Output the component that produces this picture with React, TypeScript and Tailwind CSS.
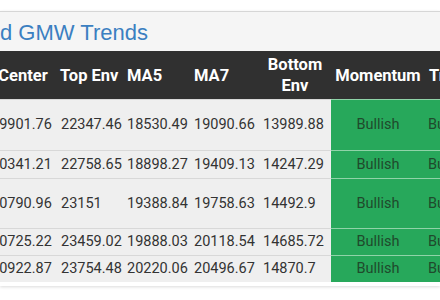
import React from "react";

const rows = [
  { h: "h-[51px]", v: ["19901.76", "22347.46", "18530.49", "19090.66", "13989.88"] },
  { h: "h-[28px]", v: ["20341.21", "22758.65", "18898.27", "19409.13", "14247.29"] },
  { h: "h-[50px]", v: ["20790.96", "23151", "19388.84", "19758.63", "14492.9"] },
  { h: "h-[27px]", v: ["20725.22", "23459.02", "19888.03", "20118.54", "14685.72"] },
  { h: "h-[27px]", v: ["20922.87", "23754.48", "20220.06", "20496.67", "14870.7"] },
];

const cols = "grid grid-cols-[70px_66px_67px_68px_72px_94px_80px]";

export default function App() {
  return (
    <div className="w-[440px] h-[300px] overflow-hidden bg-white" style={{ fontFamily: "Roboto, sans-serif" }}>
      <div className="h-[11px]" />
      <div className="border-t border-[#d6d6d6] shadow-[0_1px_3px_rgba(0,0,0,0.15)] bg-white">
        <div className="h-[39px] bg-[#f5f5f5] flex items-center">
          <span
            className="text-[22px] leading-none text-[#3b7fc1] pt-[3px]"
            style={{ fontFamily: "'Liberation Sans', Arial, sans-serif" }}
          >
            d GMW Trends
          </span>
        </div>
        <div className="ml-[-12px] w-[560px]">
          <div className={`${cols} h-[48px] bg-[#303030] text-white font-bold text-[16.5px] leading-[21px]`}>
            <div className="flex items-center justify-center">Center</div>
            <div className="flex items-center pl-[2px]">Top Env</div>
            <div className="flex items-center pl-[3px]">MA5</div>
            <div className="flex items-center pl-[3px]">MA7</div>
            <div className="flex items-center justify-center text-center">
              Bottom
              <br />
              Env
            </div>
            <div className="flex items-center justify-center">Momentum</div>
            <div className="flex items-center pl-[4px]">Trend</div>
          </div>
          {rows.map((r, i) => (
            <div key={i} className={`${cols} ${r.h} text-[14.5px] text-[#333]`}>
              {r.v.map((val, j) => (
                <div
                  key={j}
                  className={`flex items-center bg-[#efefef] border-t border-[#d8d8d8] ${
                    j === 0 ? "pl-[3px]" : j === 4 ? "pl-[4px]" : "pl-[3px]"
                  }`}
                >
                  {val}
                </div>
              ))}
              <div className="flex items-center justify-center bg-[#27a85b] border-t border-[#8fd3a8] text-[#1f4a2c]">
                Bullish
              </div>
              <div className="flex items-center pl-[3px] bg-[#27a85b] border-t border-[#8fd3a8] text-[#1f4a2c]">
                Bullish
              </div>
            </div>
          ))}
        </div>
        <div className="h-[4px] bg-white" />
      </div>
    </div>
  );
}
